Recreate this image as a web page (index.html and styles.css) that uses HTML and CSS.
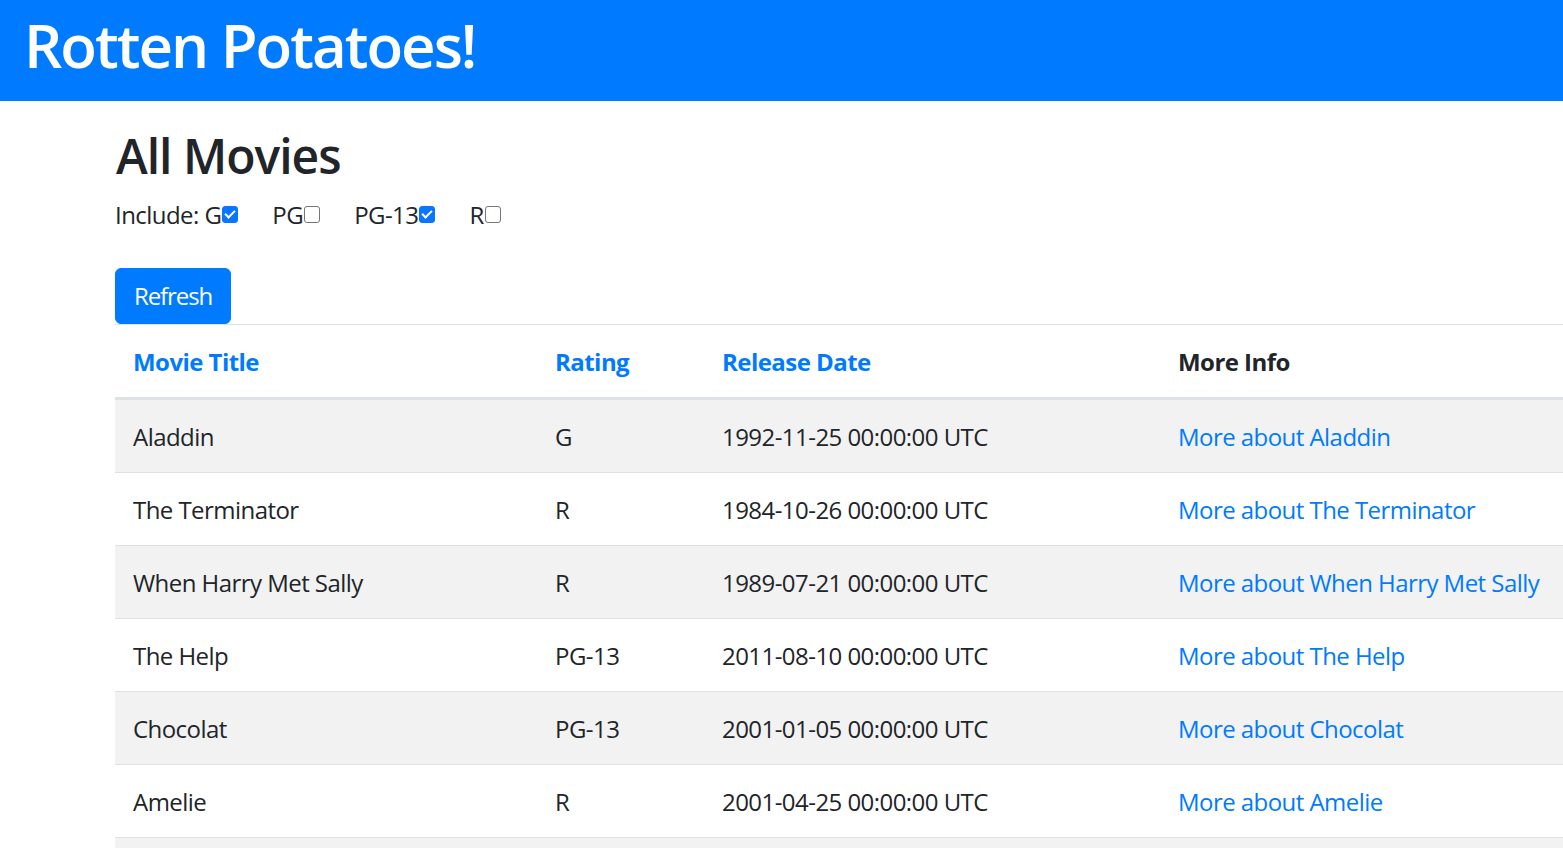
FILE: index.html
```html
<!DOCTYPE html>
<html lang="en">
<head>
<meta charset="utf-8">
<title>Rotten Potatoes!</title>
<link rel="stylesheet" href="styles.css">
</head>
<body>
<header class="site-header">
  <h1 class="brand">Rotten Potatoes!</h1>
</header>
<main class="content">
  <h2 class="page-title">All Movies</h2>
  <form class="filter-form">
    <div class="ratings"><span class="rating-label">Include: G</span><input type="checkbox" class="rating-box" checked><span class="rating-label">PG</span><input type="checkbox" class="rating-box"><span class="rating-label">PG-13</span><input type="checkbox" class="rating-box" checked><span class="rating-label">R</span><input type="checkbox" class="rating-box"></div>
    <button type="button" class="btn-refresh">Refresh</button>
  </form>
  <table class="movies">
    <colgroup>
      <col class="col-title">
      <col class="col-rating">
      <col class="col-date">
      <col class="col-info">
    </colgroup>
    <thead>
      <tr>
        <th><a href="#" class="sort-link">Movie Title</a></th>
        <th><a href="#" class="sort-link">Rating</a></th>
        <th><a href="#" class="sort-link">Release Date</a></th>
        <th>More Info</th>
      </tr>
    </thead>
    <tbody>
      <tr><td>Aladdin</td><td>G</td><td>1992-11-25 00:00:00 UTC</td><td><a href="#" class="info-link">More about Aladdin</a></td></tr>
      <tr><td>The Terminator</td><td>R</td><td>1984-10-26 00:00:00 UTC</td><td><a href="#" class="info-link">More about The Terminator</a></td></tr>
      <tr><td>When Harry Met Sally</td><td>R</td><td>1989-07-21 00:00:00 UTC</td><td><a href="#" class="info-link">More about When Harry Met Sally</a></td></tr>
      <tr><td>The Help</td><td>PG-13</td><td>2011-08-10 00:00:00 UTC</td><td><a href="#" class="info-link">More about The Help</a></td></tr>
      <tr><td>Chocolat</td><td>PG-13</td><td>2001-01-05 00:00:00 UTC</td><td><a href="#" class="info-link">More about Chocolat</a></td></tr>
      <tr><td>Amelie</td><td>R</td><td>2001-04-25 00:00:00 UTC</td><td><a href="#" class="info-link">More about Amelie</a></td></tr>
      <tr class="row-partial"><td></td><td></td><td></td><td></td></tr>
    </tbody>
  </table>
</main>
</body>
</html>
```
FILE: styles.css
```css
html, body {
  margin: 0;
  padding: 0;
}
body {
  font-family: "Open Sans", "Noto Sans", sans-serif;
  font-size: 24px;
  line-height: 1.5;
  letter-spacing: -0.55px;
  color: #212529;
  background: #fff;
  overflow-x: hidden;
}
.site-header {
  background: #007bff;
  height: 101px;
  box-sizing: border-box;
  padding: 9px 0 0 24px;
}
.brand {
  margin: 0;
  font-size: 60px;
  font-weight: 600;
  letter-spacing: -2px;
  line-height: 72px;
  color: #fff;
}
.content {
  padding-left: 115px;
}
.page-title {
  margin: 26px 0 12px 1px;
  font-size: 48px;
  font-weight: 600;
  letter-spacing: -1px;
  line-height: 57.6px;
}
.filter-form {
  margin: 0;
}
.ratings {
  line-height: 36px;
  height: 36px;
}
.rating-box {
  -webkit-appearance: none;
  appearance: none;
  display: inline-block;
  position: relative;
  width: 16px;
  height: 17px;
  margin: 0 34px 1px 1px;
  border: 1.5px solid #767676;
  border-radius: 3px;
  background: #fff;
  box-sizing: border-box;
  vertical-align: baseline;
}
.rating-box:checked {
  background: #0a75ff;
  border-color: #0a75ff;
}
.rating-box:checked::after {
  content: "";
  position: absolute;
  left: 4px;
  top: 1px;
  width: 4px;
  height: 8px;
  border: solid #fff;
  border-width: 0 2.5px 2.5px 0;
  transform: rotate(45deg);
}
.btn-refresh {
  display: block;
  margin: 35px 0 0 0;
  padding: 9px 18px;
  border: 1px solid #007bff;
  border-radius: 6px;
  background: #007bff;
  color: #fff;
  font-family: inherit;
  font-size: 24px;
  letter-spacing: -1.1px;
  line-height: 36px;
}
.movies {
  border-collapse: collapse;
  table-layout: fixed;
  width: 1448px;
}
.col-title { width: 422px; }
.col-rating { width: 167px; }
.col-date { width: 456px; }
.col-info { width: 403px; }
.movies th,
.movies td {
  padding: 19px 18px 17px 18px;
  text-align: left;
  vertical-align: top;
  border-top: 1px solid #dee2e6;
  white-space: nowrap;
  height: 36px;
}
.movies th {
  font-weight: 700;
  border-bottom: 3px solid #dee2e6;
}
.movies tbody tr:nth-child(odd) {
  background: #f2f2f2;
}
.sort-link,
.info-link {
  color: #007bff;
  text-decoration: none;
}
```
